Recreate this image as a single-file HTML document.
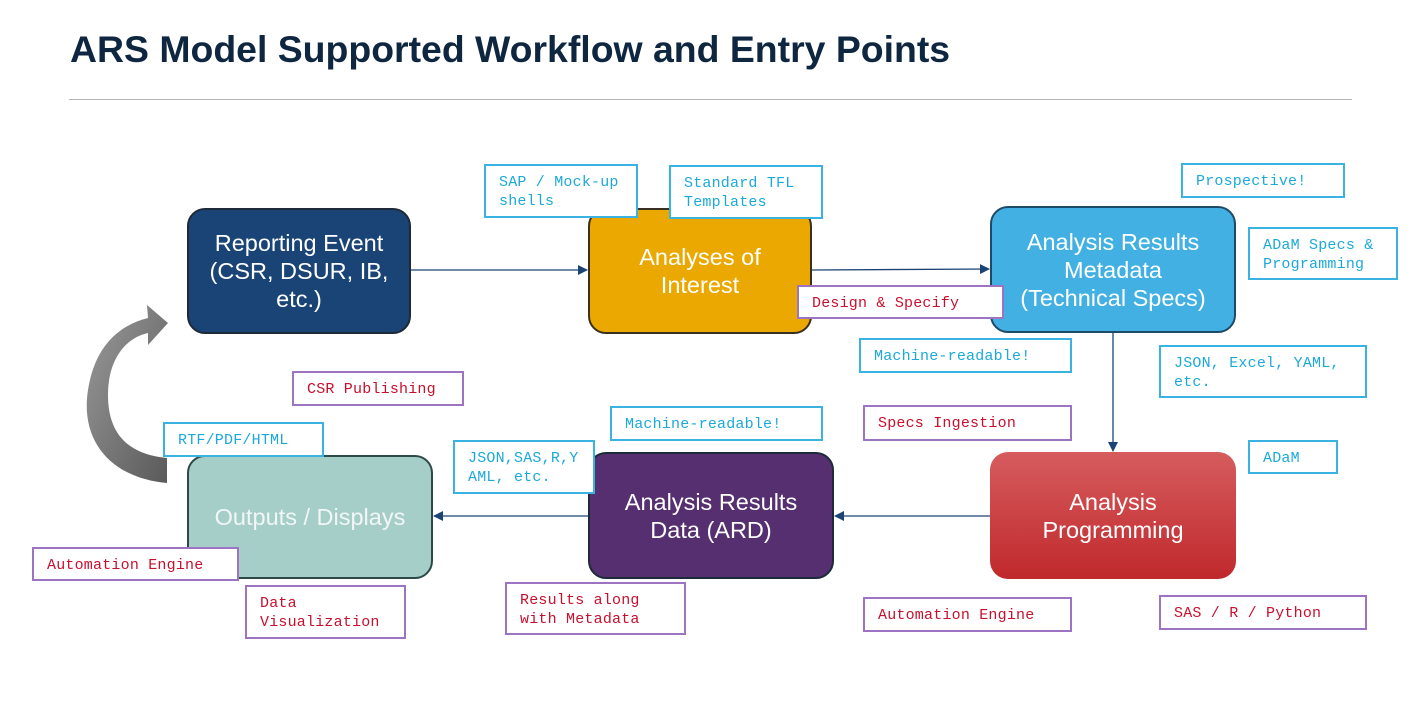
<!DOCTYPE html>
<html><head><meta charset="utf-8"><style>
body{margin:0;width:1420px;height:705px;background:#fff;position:relative;overflow:hidden;font-family:"Liberation Sans",sans-serif}
.t{position:absolute;left:70px;top:28px;font-size:37.4px;font-weight:bold;color:#0f2640;letter-spacing:0px}
.hr{position:absolute;left:69px;top:99px;width:1283px;height:1px;background:#b5b5b5}
.bx{position:absolute;box-sizing:border-box;border:2px solid #1e2a38;border-radius:18px;color:#fff;font-size:23.5px;line-height:28px;display:flex;align-items:center;justify-content:center;text-align:center}
.l{position:absolute;box-sizing:border-box;background:#fff;border:2px solid #3ab2e2;color:#1ca9da;font-family:"Liberation Mono",monospace;font-size:15px;line-height:19px;padding:7px 13px;letter-spacing:0.2px;white-space:pre}
.p{border-color:#9c74c2;color:#c8102e}
</style></head><body>
<div class="t">ARS Model Supported Workflow and Entry Points</div>
<div class="hr"></div>
<svg style="position:absolute;left:0;top:0" width="1420" height="705">
<defs><linearGradient id="g" x1="0" y1="0" x2="1" y2="1"><stop offset="0" stop-color="#9a9a9a"/><stop offset="1" stop-color="#5a5a5a"/></linearGradient>
<marker id="a" markerWidth="10" markerHeight="10" refX="9" refY="5" orient="auto" markerUnits="userSpaceOnUse"><path d="M0,0L10,5L0,10z" fill="#1b4475"/></marker></defs>
<path d="M167,483 C110,478 80,440 88,390 C95,345 120,325 148,318 L147,305 L168,323 L148,345 L148,333 C125,338 108,360 108,395 C108,440 135,455 167,458 Z" fill="url(#g)"/>
<g stroke="#1b4475" stroke-width="1.3" fill="none">
<line x1="411" y1="270" x2="587" y2="270" marker-end="url(#a)"/>
<line x1="812" y1="270" x2="989" y2="269" marker-end="url(#a)"/>
<line x1="1113" y1="332" x2="1113" y2="451" marker-end="url(#a)"/>
<line x1="990" y1="516" x2="835" y2="516" marker-end="url(#a)"/>
<line x1="588" y1="516" x2="434" y2="516" marker-end="url(#a)"/>
</g></svg>
<div class="bx" style="left:187px;top:208px;width:224px;height:126px;background:#1a4476">Reporting Event<br>(CSR, DSUR, IB,<br>etc.)</div>
<div class="bx" style="left:588px;top:208px;width:224px;height:126px;background:#eaa800;border-color:#3a3020">Analyses of<br>Interest</div>
<div class="bx" style="left:990px;top:206px;width:246px;height:127px;background:#43b0e4;border-color:#1d4a66">Analysis Results<br>Metadata<br>(Technical Specs)</div>
<div class="bx" style="left:990px;top:452px;width:246px;height:127px;background:linear-gradient(#d65c5e,#c0292c);border:none">Analysis<br>Programming</div>
<div class="bx" style="left:588px;top:452px;width:246px;height:127px;background:#562f71">Analysis Results<br>Data (ARD)</div>
<div class="bx" style="left:187px;top:455px;width:246px;height:124px;background:#a5cec9;border-color:#2e4a48;color:#f2f6f6">Outputs / Displays</div>

<div class="l" style="left:484px;top:164px;width:154px;height:54px">SAP / Mock-up
shells</div>
<div class="l" style="left:669px;top:165px;width:154px;height:54px">Standard TFL
Templates</div>
<div class="l" style="left:1181px;top:163px;width:164px;height:35px">Prospective!</div>
<div class="l" style="left:1248px;top:227px;width:150px;height:53px">ADaM Specs &amp;
Programming</div>
<div class="l p" style="left:797px;top:285px;width:207px;height:34px">Design &amp; Specify</div>
<div class="l" style="left:859px;top:338px;width:213px;height:35px">Machine-readable!</div>
<div class="l" style="left:1159px;top:345px;width:208px;height:53px">JSON, Excel, YAML,
etc.</div>
<div class="l p" style="left:863px;top:405px;width:209px;height:36px">Specs Ingestion</div>
<div class="l" style="left:1248px;top:440px;width:90px;height:34px">ADaM</div>
<div class="l" style="left:610px;top:406px;width:213px;height:35px">Machine-readable!</div>
<div class="l" style="left:453px;top:440px;width:142px;height:54px">JSON,SAS,R,Y
AML, etc.</div>
<div class="l p" style="left:292px;top:371px;width:172px;height:35px">CSR Publishing</div>
<div class="l" style="left:163px;top:422px;width:161px;height:35px">RTF/PDF/HTML</div>
<div class="l p" style="left:32px;top:547px;width:207px;height:34px">Automation Engine</div>
<div class="l p" style="left:245px;top:585px;width:161px;height:54px">Data
Visualization</div>
<div class="l p" style="left:505px;top:582px;width:181px;height:53px">Results along
with Metadata</div>
<div class="l p" style="left:863px;top:597px;width:209px;height:35px">Automation Engine</div>
<div class="l p" style="left:1159px;top:595px;width:208px;height:35px">SAS / R / Python</div>
</body></html>
